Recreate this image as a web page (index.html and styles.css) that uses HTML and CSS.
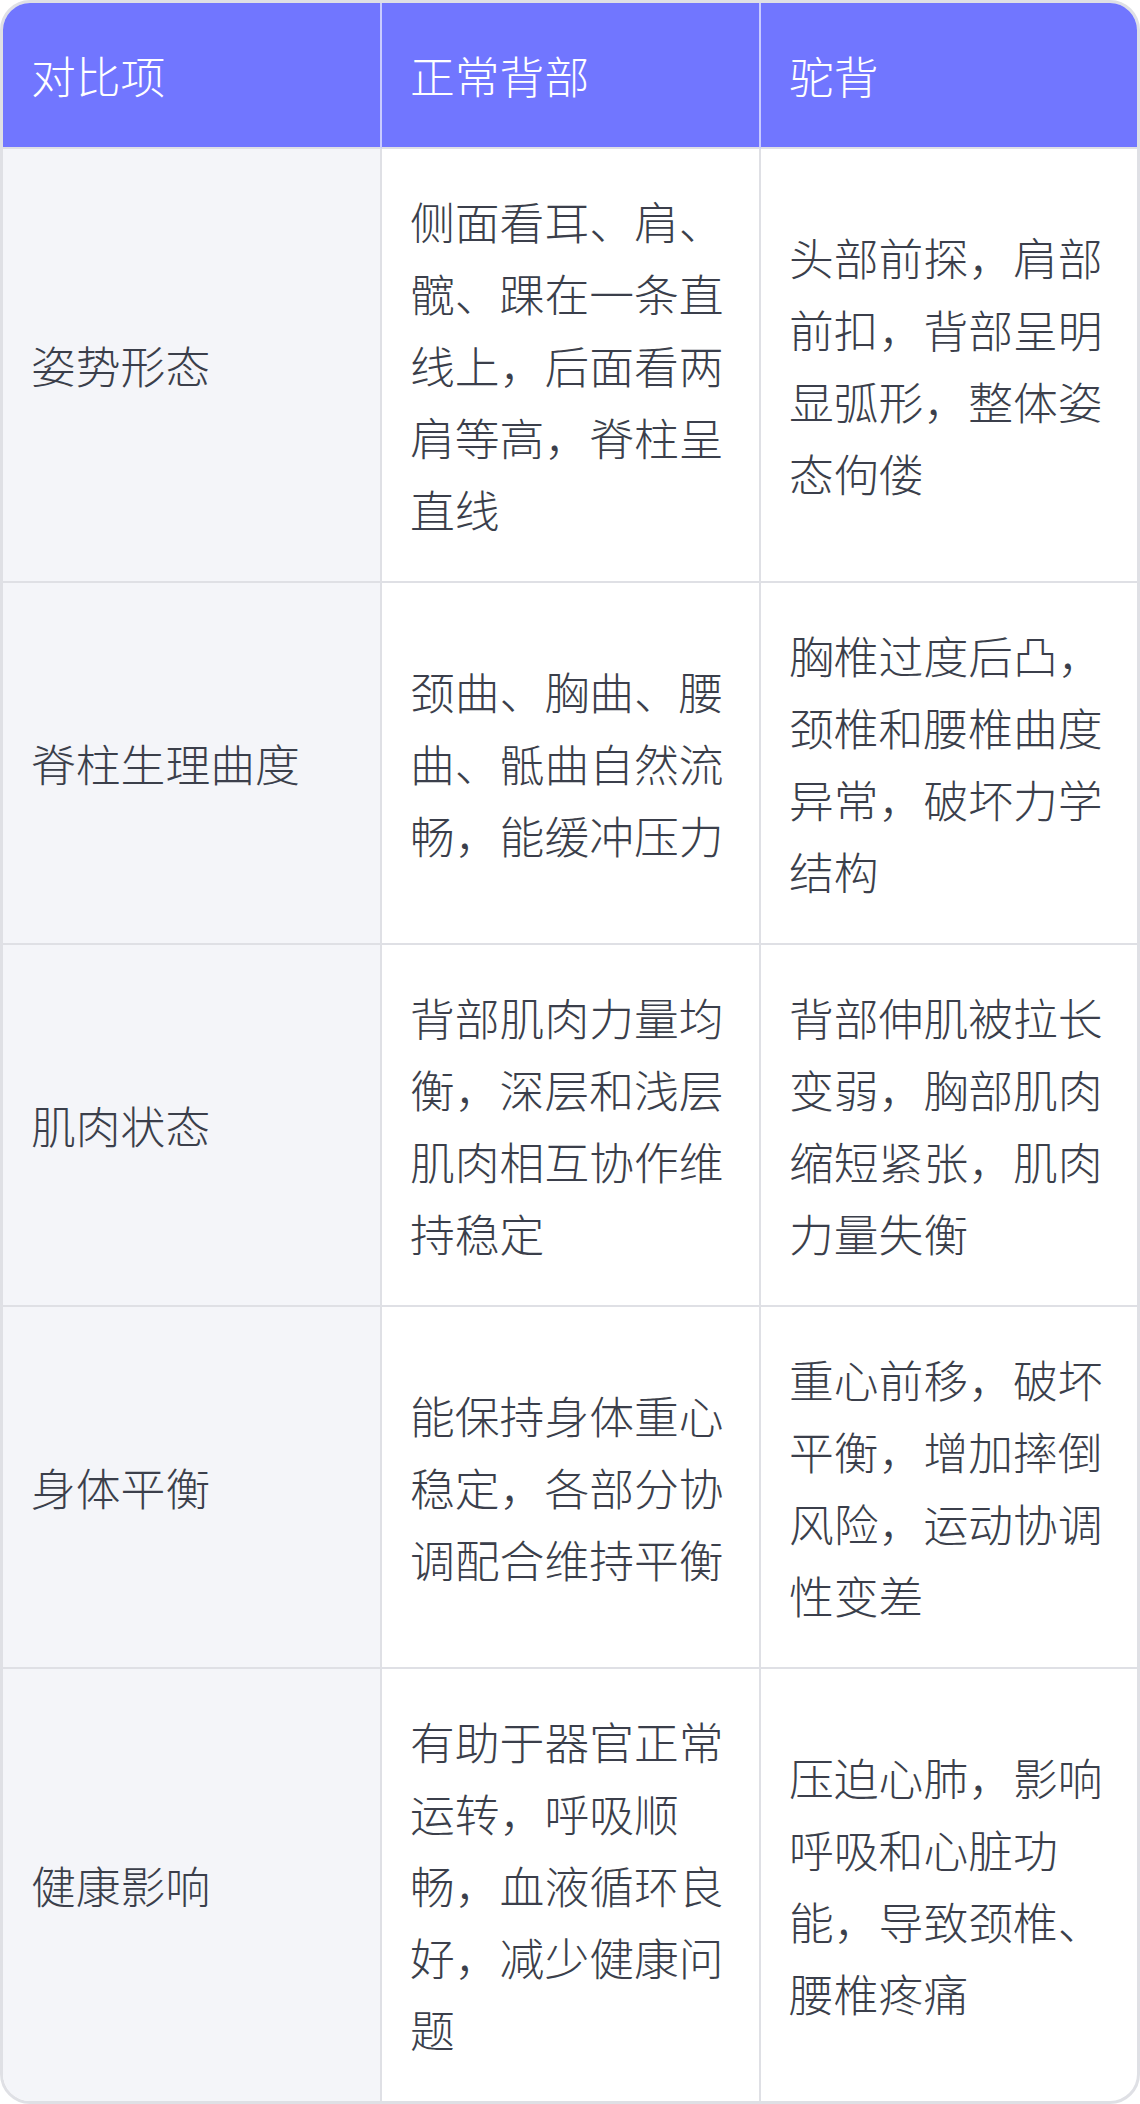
FILE: index.html
```html
<!DOCTYPE html>
<html lang="zh-CN">
<head>
    <meta charset="utf-8">
    <title>正常背部与驼背对比</title>
    <link rel="stylesheet" href="styles.css">
</head>
<body>
<div class="compare-wrap">
    <table class="compare-table">
        <colgroup>
            <col class="col-item">
            <col class="col-normal">
            <col class="col-hunch">
        </colgroup>
        <thead>
        <tr>
            <th>对比项</th>
            <th>正常背部</th>
            <th>驼背</th>
        </tr>
        </thead>
        <tbody>
        <tr>
            <td class="item">姿势形态</td>
            <td>侧面看耳、肩、髋、踝在一条直线上，后面看两肩等高，脊柱呈直线</td>
            <td>头部前探，肩部前扣，背部呈明显弧形，整体姿态佝偻</td>
        </tr>
        <tr>
            <td class="item">脊柱生理曲度</td>
            <td>颈曲、胸曲、腰曲、骶曲自然流畅，能缓冲压力</td>
            <td>胸椎过度后凸，颈椎和腰椎曲度异常，破坏力学结构</td>
        </tr>
        <tr>
            <td class="item">肌肉状态</td>
            <td>背部肌肉力量均衡，深层和浅层肌肉相互协作维持稳定</td>
            <td>背部伸肌被拉长变弱，胸部肌肉缩短紧张，肌肉力量失衡</td>
        </tr>
        <tr>
            <td class="item">身体平衡</td>
            <td>能保持身体重心稳定，各部分协调配合维持平衡</td>
            <td>重心前移，破坏平衡，增加摔倒风险，运动协调性变差</td>
        </tr>
        <tr>
            <td class="item">健康影响</td>
            <td>有助于器官正常运转，呼吸顺畅，血液循环良好，减少健康问题</td>
            <td>压迫心肺，影响呼吸和心脏功能，导致颈椎、腰椎疼痛</td>
        </tr>
        </tbody>
    </table>
</div>
</body>
</html>
```

FILE: styles.css
```css
html, body {
    margin: 0;
    padding: 0;
    background: #ffffff;
}
body {
    font-family: "Noto Sans CJK SC", "Noto Sans", sans-serif;
    color: #3b3f4b;
}

.compare-wrap {
    width: 1140px;
    box-sizing: border-box;
    border: 3px solid #dfe0e5;
    border-radius: 30px;
    overflow: hidden;
}

table.compare-table {
    width: 100%;
    table-layout: fixed;
    border-collapse: separate;
    border-spacing: 0;
}
col.col-item,
col.col-normal {
    width: 379px;
}

table.compare-table th,
table.compare-table td {
    padding: 36px 28px;
    font-size: 44.8px;
    line-height: 72px;
    font-weight: 300;
    text-align: left;
    vertical-align: middle;
    border-right: 2px solid #dfe0e5;
    border-bottom: 2px solid #dfe0e5;
    word-break: break-all;
}
table.compare-table tr > :last-child {
    border-right: 0;
}
table.compare-table tbody tr:last-child td {
    border-bottom: 0;
}

/* 表头 */
table.compare-table th {
    background: #7176ff;
    color: #ffffff;
    border-right-color: #c9cbff;
}

/* 第一列 */
table.compare-table td.item {
    background: #f4f5f9;
}
```
